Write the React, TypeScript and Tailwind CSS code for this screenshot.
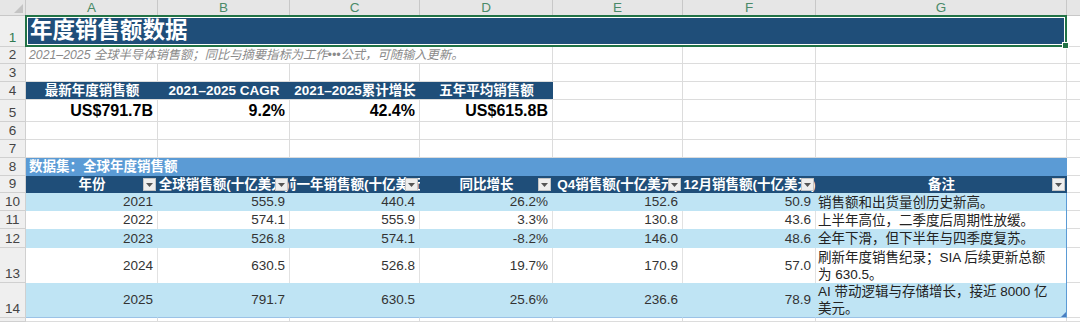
import type { ReactNode } from 'react'

const cols = ['A', 'B', 'C', 'D', 'E', 'F', 'G']

const kpis = [
  { label: '最新年度销售额', value: 'US$791.7B' },
  { label: '2021–2025 CAGR', value: '9.2%' },
  { label: '2021–2025累计增长', value: '42.4%' },
  { label: '五年平均销售额', value: 'US$615.8B' },
]

const heads = ['年份', '全球销售额(十亿美元)', '前一年销售额(十亿美元)', '同比增长', 'Q4销售额(十亿美元)', '12月销售额(十亿美元)']

const rows = [
  { year: '2021', total: '555.9', prev: '440.4', yoy: '26.2%', q4: '152.6', dec: '50.9', note: ['销售额和出货量创历史新高。'] },
  { year: '2022', total: '574.1', prev: '555.9', yoy: '3.3%', q4: '130.8', dec: '43.6', note: ['上半年高位，二季度后周期性放缓。'] },
  { year: '2023', total: '526.8', prev: '574.1', yoy: '-8.2%', q4: '146.0', dec: '48.6', note: ['全年下滑，但下半年与四季度复苏。'] },
  { year: '2024', total: '630.5', prev: '526.8', yoy: '19.7%', q4: '170.9', dec: '57.0', note: ['刷新年度销售纪录；SIA 后续更新总额', '为 630.5。'] },
  { year: '2025', total: '791.7', prev: '630.5', yoy: '25.6%', q4: '236.6', dec: '78.9', note: ['AI 带动逻辑与存储增长，接近 8000 亿', '美元。'] },
]

function RowNum({ n, active }: { n?: number; active?: boolean }) {
  return (
    <div className={`flex items-end justify-center overflow-hidden border-r border-b border-[#d0d0d0] bg-[#efefef] text-[13.5px] leading-[16px] ${active ? 'text-[#2f7a52]' : 'text-[#444]'}`}>
      {n}
    </div>
  )
}

function Blank({ last }: { last?: boolean }) {
  return <div className={last ? 'border-b border-[#dcdcdc]' : 'border-r border-b border-[#dcdcdc]'} />
}

function Drop() {
  return (
    <span className="absolute right-[2px] top-[2px] flex h-[13px] w-[13px] items-center justify-center border border-[#c4c4c4] bg-[#eeeeee]">
      <svg width="7" height="4" viewBox="0 0 7 4">
        <path d="M0 0h7L3.5 4z" fill="#555" />
      </svg>
    </span>
  )
}

function Head({ children }: { children: ReactNode }) {
  return (
    <div className="relative flex items-center justify-center overflow-hidden whitespace-nowrap bg-[#1f4e79] text-[13.5px] font-bold leading-none text-white">
      <span className="shrink-0">{children}</span>
      <Drop />
    </div>
  )
}

export default function App() {
  return (
    <div className="grid h-[322px] w-[1080px] grid-cols-[26px_132px_132px_130px_133px_130px_133px_251px_13px] grid-rows-[16px_31px_17px_18px_18px_22px_18px_18px_18px_17px_18px_18px_19px_35px_35px_4px] overflow-hidden bg-white font-['Liberation_Sans','Noto_Sans_CJK_SC',sans-serif]">
      {/* column headers */}
      <div className="relative border-r border-b border-[#c8c8c8] bg-[#e6e6e6]">
        <svg className="absolute bottom-[2px] right-[2px]" width="9" height="9" viewBox="0 0 9 9">
          <path d="M9 0v9H0z" fill="#c4c4c4" />
        </svg>
      </div>
      {cols.map(c => (
        <div key={c} className="flex items-center justify-center border-r border-b border-[#c8c8c8] bg-[#e6e6e6] text-[13.5px] leading-none text-[#4a8a68]">
          {c}
        </div>
      ))}
      <div className="border-b border-[#c8c8c8] bg-[#e6e6e6]" />

      {/* row 1 - title */}
      <RowNum n={1} active />
      <div className="relative col-span-7 -ml-px -mt-px flex border-2 border-[#217346] bg-white p-px">
        <div className="flex flex-1 items-center bg-[#1f4e79] pl-[2px] text-[22.5px] font-bold leading-none text-white">年度销售额数据</div>
        <span className="absolute -bottom-[4px] -right-[4px] h-[7px] w-[7px] border border-white bg-[#217346]" />
      </div>
      <Blank last />

      {/* row 2 - subtitle */}
      <RowNum n={2} />
      <div className="col-span-4 flex items-center whitespace-nowrap border-r border-b border-[#dcdcdc] pl-[3px] text-[12.3px] italic leading-none text-[#8a8a8a]">
        2021–2025 全球半导体销售额；同比与摘要指标为工作•••公式，可随输入更新。
      </div>
      <Blank />
      <Blank />
      <Blank />
      <Blank last />

      {/* row 3 */}
      <RowNum n={3} />
      {cols.map(c => <Blank key={c} />)}
      <Blank last />

      {/* row 4 - kpi labels */}
      <RowNum n={4} />
      {kpis.map(k => (
        <div key={k.label} className="flex items-center justify-center whitespace-nowrap border-b border-[#dcdcdc] bg-[#1f4e79] text-[13.5px] font-bold leading-none text-white">
          {k.label}
        </div>
      ))}
      <Blank />
      <Blank />
      <Blank />
      <Blank last />

      {/* row 5 - kpi values */}
      <RowNum n={5} />
      {kpis.map(k => (
        <div key={k.value} className="flex items-center justify-end border-r border-b border-[#dcdcdc] pr-1 text-[16px] font-bold leading-none text-black">
          {k.value}
        </div>
      ))}
      <Blank />
      <Blank />
      <Blank />
      <Blank last />

      {/* rows 6-7 */}
      <RowNum n={6} />
      {cols.map(c => <Blank key={c} />)}
      <Blank last />
      <RowNum n={7} />
      {cols.map(c => <Blank key={c} />)}
      <Blank last />

      {/* row 8 - dataset band */}
      <RowNum n={8} />
      <div className="col-span-7 flex items-center bg-[#5b9bd5] pl-[3px] text-[13.5px] font-bold leading-none text-white">数据集：全球年度销售额</div>
      <Blank last />

      {/* row 9 - table header */}
      <RowNum n={9} />
      {heads.map(h => <Head key={h}>{h}</Head>)}
      <Head>备注</Head>
      <Blank last />

      {/* rows 10-14 - data */}
      {rows.map((r, i) => {
        const band = i % 2 === 0
        const isLast = i === rows.length - 1
        const cell = `flex items-center justify-end pr-1 text-[13.5px] leading-none text-[#333] border-r ${band ? 'bg-[#bfe4f4] border-[#bfe4f4]' : 'bg-white border-[#e2e2e2]'} ${isLast ? 'border-b border-b-[#9bc2e6]' : ''}`
        return [
          <RowNum key={`n${r.year}`} n={10 + i} />,
          ...[r.year, r.total, r.prev, r.yoy, r.q4, r.dec].map((v, j) => (
            <div key={`${r.year}-${j}`} className={cell}>{v}</div>
          )),
          <div
            key={`note${r.year}`}
            className={`relative flex flex-col justify-center border-r border-[#5b9bd5] pl-[2px] text-[13.5px] leading-[17px] text-[#222] ${band ? 'bg-[#bfe4f4]' : 'bg-white'} ${isLast ? 'border-b border-b-[#9bc2e6]' : ''}`}
          >
            {r.note.map(line => (
              <span key={line} className="whitespace-nowrap">{line}</span>
            ))}
            {isLast && (
              <svg className="absolute bottom-0 right-0" width="5" height="5" viewBox="0 0 5 5">
                <path d="M5 0v5H0z" fill="#4a7fc1" />
              </svg>
            )}
          </div>,
          <Blank key={`h${r.year}`} last />,
        ]
      })}

      {/* row 15 */}
      <RowNum />
      {cols.map(c => <Blank key={c} />)}
      <Blank last />
    </div>
  )
}
